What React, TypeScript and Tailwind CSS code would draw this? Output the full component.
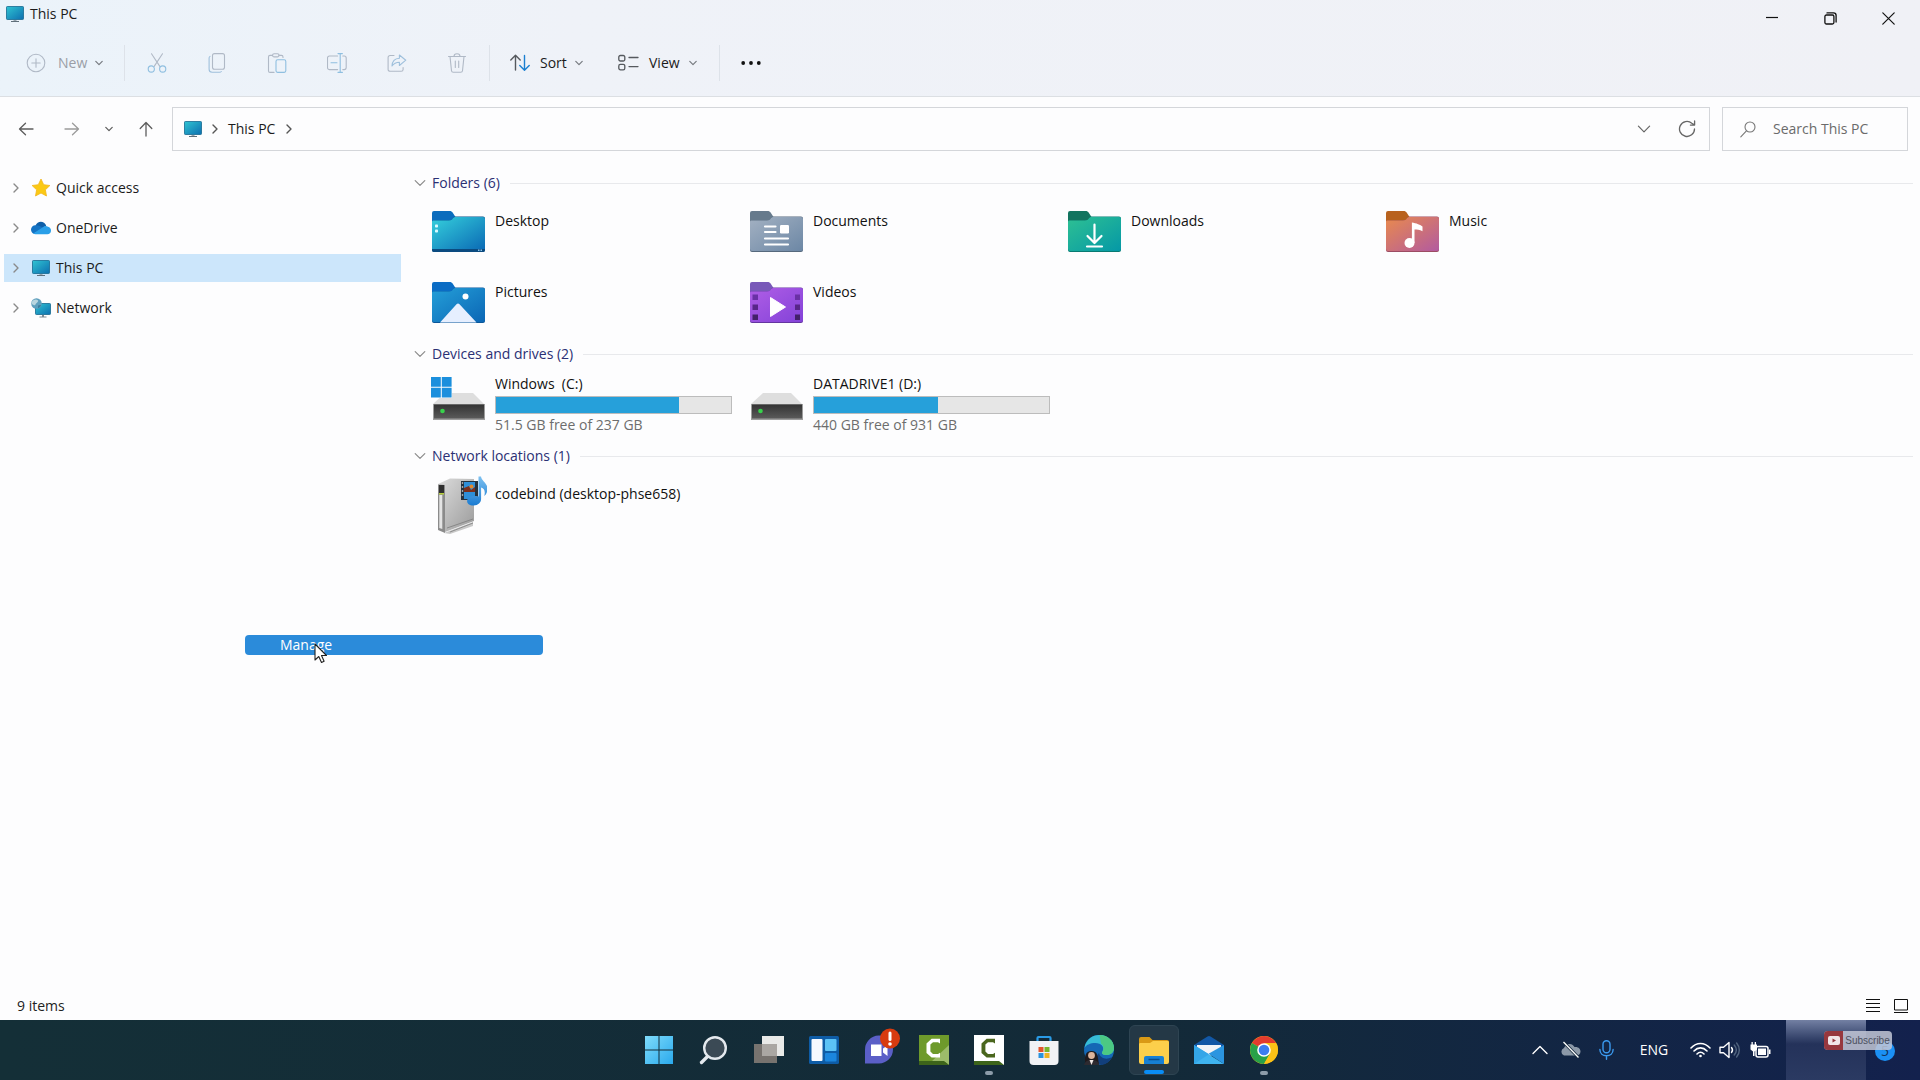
import type { ReactNode } from 'react';

const stroke = {
  fill: 'none',
  strokeLinecap: 'round' as const,
  strokeLinejoin: 'round' as const,
};

/* ---------- small glyphs ---------- */

function ChevronDown({ className = 'text-[#777b80]', size = 8 }: { className?: string; size?: number }) {
  return (
    <svg width={size} height={size} viewBox="0 0 8 8" className={className} {...stroke} stroke="currentColor">
      <path d="M0.8 2.4 4 5.6 7.2 2.4" vectorEffect="non-scaling-stroke" strokeWidth="1.2" />
    </svg>
  );
}

function ChevronRight({ className }: { className: string }) {
  return (
    <svg width="8" height="12" viewBox="0 0 8 12" className={className} {...stroke} stroke="currentColor" strokeWidth="1.4">
      <path d="M2 2l4 4-4 4" />
    </svg>
  );
}

function ArrowIcon({ className = '' }: { className?: string }) {
  return (
    <svg width="16" height="16" viewBox="0 0 16 16" className={className} {...stroke} stroke="currentColor" strokeWidth="1.3">
      <path d="M15 8H1.5M7.5 2.2 1.5 8l6 5.8" />
    </svg>
  );
}

function MonitorIcon() {
  return (
    <svg width="18" height="17" viewBox="0 0 18 17">
      <defs>
        <linearGradient id="screen" x1="0" y1="0" x2="1" y2="1">
          <stop offset="0" stopColor="#2fc4d2" />
          <stop offset="1" stopColor="#0d6fb0" />
        </linearGradient>
      </defs>
      <rect x="0.5" y="0.5" width="17" height="13" rx="0.8" fill="url(#screen)" stroke="#15688f" strokeWidth="0.8" />
      <path d="M7.5 14h3v1.3h-3z" fill="#9aa6ae" />
      <path d="M5 15h8v1H5z" fill="#5f6f7a" />
    </svg>
  );
}

/* ---------- toolbar ---------- */

function ToolSvg({ children }: { children: ReactNode }) {
  return (
    <svg width="20" height="20" viewBox="0 0 20 20" {...stroke} stroke="#b0b9c6" strokeWidth="1.1">
      {children}
    </svg>
  );
}

const tools = [
  {
    label: 'Cut',
    icon: (
      <>
        <path d="M4.5 0.8 13 13.6M15.5 0.8 7 13.6" />
        <circle cx="4.3" cy="16" r="3.1" stroke="#8fbfe0" />
        <circle cx="15.7" cy="16" r="3.1" stroke="#8fbfe0" />
      </>
    ),
  },
  {
    label: 'Copy',
    icon: (
      <>
        <rect x="5.5" y="0.6" width="12" height="15.6" rx="2" />
        <path d="M3 3.4a2 2 0 0 0-0.9 1.7v11.2a3 3 0 0 0 3 3h7.6a2 2 0 0 0 1.6-0.8" stroke="#9fc0dc" />
      </>
    ),
  },
  {
    label: 'Paste',
    icon: (
      <>
        <path d="M5.5 2.4H3a1.5 1.5 0 0 0-1.5 1.5v14A1.5 1.5 0 0 0 3 19.4h4M12 2.4h2.5A1.5 1.5 0 0 1 16 3.9v0.6" />
        <rect x="5.6" y="0.7" width="6.4" height="3.2" rx="1.5" />
        <rect x="9" y="6.8" width="9.8" height="12.6" rx="1.6" stroke="#8fbfe0" />
      </>
    ),
  },
  {
    label: 'Rename',
    icon: (
      <>
        <path d="M10.6 3H2.4A1.9 1.9 0 0 0 0.5 4.9v9.8a1.9 1.9 0 0 0 1.9 1.9h8.2M15.8 3h1.4a2 2 0 0 1 2 2v9.6a2 2 0 0 1-2 2h-1.4" />
        <path d="M13.2 1v18M11 0.6h4.4M11 19.4h4.4M4 9.8h6" stroke="#8fbfe0" />
      </>
    ),
  },
  {
    label: 'Share',
    icon: (
      <>
        <path d="M7 2.5H3A1.9 1.9 0 0 0 1.1 4.4v12A1.9 1.9 0 0 0 3 18.3h11.2a1.9 1.9 0 0 0 1.9-1.9v-1.8" />
        <path d="M12.4 2v3.2C8 5.4 5.2 8 5 13c2-2.9 4.2-3.8 7.4-3.8v3.3l6.4-5.3z" stroke="#9fc0dc" />
      </>
    ),
  },
  {
    label: 'Delete',
    icon: (
      <path d="M1.5 3.5h17M3 3.5l1.5 14.2a1.8 1.8 0 0 0 1.8 1.6h7.4a1.8 1.8 0 0 0 1.8-1.6L17 3.5M7 3.2a3 2.4 0 0 1 6 0M8.3 8v6.5M11.7 8v6.5" />
    ),
  },
];

function Divider() {
  return <div className="h-9 w-px bg-[#dde2e9]" />;
}

function Toolbar() {
  return (
    <div className="mb-1.5 flex h-[54px] items-center text-sm">
      <button className="ml-[26px] flex items-center text-[#9a9ea6]">
        <ToolSvg>
          <circle cx="10" cy="10" r="8.8" />
          <path d="M10 5.8v8.4M5.8 10h8.4" />
        </ToolSvg>
        <span className="ml-3 w-[37px] text-left">New</span>
        <ChevronDown />
      </button>
      <div className="ml-[21px] mr-0.5">
        <Divider />
      </div>
      {tools.map((tool) => (
        <button key={tool.label} aria-label={tool.label} className="flex h-10 w-[60px] items-center justify-center">
          <ToolSvg>{tool.icon}</ToolSvg>
        </button>
      ))}
      <div className="ml-0.5 mr-5">
        <Divider />
      </div>
      <button className="flex items-center text-[#1b1b1b]">
        <svg width="20" height="18" viewBox="0 0 20 18" {...stroke} strokeWidth="1.4">
          <path d="M5.5 16V1.5M0.8 6l4.700-4.700L10.200 6" stroke="#55595e" />
          <path d="M14.5 1.5V16M9.800 11.500l4.700 4.700 4.700-4.700" stroke="#1b7fd0" />
        </svg>
        <span className="ml-2.5 w-[35px] text-left">Sort</span>
        <ChevronDown />
      </button>
      <button className="ml-[35px] flex items-center text-[#1b1b1b]">
        <svg width="21" height="18" viewBox="0 0 21 18" {...stroke} stroke="#55595e" strokeWidth="1.3">
          <rect x="0.8" y="1.5" width="6" height="5.5" rx="1.6" />
          <rect x="0.8" y="10.3" width="6" height="5.5" rx="1.6" />
          <path d="M11 3.5h9M11 12.6h9" />
        </svg>
        <span className="ml-2.5 w-10 text-left">View</span>
        <ChevronDown />
      </button>
      <div className="ml-[22px] mr-[21px]">
        <Divider />
      </div>
      <button aria-label="See more">
        <svg width="20" height="6" viewBox="0 0 20 6" fill="#111">
          <circle cx="2.2" cy="3" r="1.9" />
          <circle cx="10" cy="3" r="1.9" />
          <circle cx="17.8" cy="3" r="1.9" />
        </svg>
      </button>
    </div>
  );
}

function TitleBar() {
  return (
    <div className="flex h-9 justify-between">
      <div className="flex h-7 items-center gap-1.5 pl-1.5 text-sm text-[#1b1b1b]">
        <MonitorIcon />
        <h1>This PC</h1>
      </div>
      <div className="flex items-center pr-0.5">
        <button aria-label="Minimize" className="flex h-9 w-[59px] items-center justify-center">
          <svg width="12" height="12" stroke="#111" strokeWidth="1.2">
            <path d="M0 5.5h12" />
          </svg>
        </button>
        <button aria-label="Restore" className="flex h-9 w-[58px] items-center justify-center">
          <svg width="13" height="13" viewBox="0 0 13 13" {...stroke} stroke="#111" strokeWidth="1.3">
            <rect x="0.9" y="3" width="9" height="9" rx="1.5" />
            <path d="M3 0.9h6.5a2.6 2.6 0 0 1 2.6 2.6V10" />
          </svg>
        </button>
        <button aria-label="Close" className="flex h-9 w-[59px] items-center justify-center">
          <svg width="13" height="13" viewBox="0 0 13 13" {...stroke} stroke="#111" strokeWidth="1.2">
            <path d="M0.8 0.8l11.4 11.4M12.2 0.8 0.8 12.2" />
          </svg>
        </button>
      </div>
    </div>
  );
}

function AddressRow() {
  return (
    <div className="flex items-center pr-3 pt-2.5 text-sm">
      <div className="flex w-[172px] items-center gap-2.5 pl-2 text-[#5c5c5c]">
        <button aria-label="Back" className="flex h-9 w-9 items-center justify-center">
          <ArrowIcon />
        </button>
        <button aria-label="Forward" className="flex h-9 w-9 items-center justify-center text-[#9b9b9b]">
          <ArrowIcon className="rotate-180" />
        </button>
        <button aria-label="Recent locations" className="flex h-9 w-[18px] items-center justify-center">
          <ChevronDown className="text-[#5c5c5c]" />
        </button>
        <button aria-label="Up" className="flex h-9 w-9 items-center justify-center">
          <ArrowIcon className="rotate-90" />
        </button>
      </div>
      <div className="flex h-11 flex-1 items-center border border-[#d4d6da] pl-[11px] pr-[13px] text-[#1b1b1b]">
        <MonitorIcon />
        <ChevronRight className="mx-[9px] text-[#555]" />
        <button className="w-12 whitespace-nowrap text-left">This PC</button>
        <ChevronRight className="ml-[9px] text-[#555]" />
        <button aria-label="Previous locations" className="ml-auto flex w-6 justify-center">
          <ChevronDown className="text-[#666]" size={14} />
        </button>
        <button aria-label="Refresh" className="ml-[22px]">
          <svg width="18" height="18" viewBox="0 0 18 18" {...stroke} stroke="#666" strokeWidth="1.3">
            <path d="M16.5 9A7.5 7.5 0 1 1 13.8 3.2L16.3 4.8M16.6 0.9v4.2h-4.2" />
          </svg>
        </button>
      </div>
      <label className="ml-3 flex h-11 w-[186px] items-center border border-[#d4d6da] pl-[17px]">
        <svg width="16" height="17" viewBox="0 0 16 17" className="shrink-0" {...stroke} stroke="#777" strokeWidth="1.1">
          <circle cx="10" cy="6" r="5" />
          <path d="M6.4 9.8 0.8 15.8" />
        </svg>
        <input
          aria-label="Search This PC"
          placeholder="Search This PC"
          className="ml-[17px] w-full min-w-0 bg-transparent outline-none placeholder:text-[#6b6b6b]"
        />
      </label>
    </div>
  );
}

/* ---------- navigation pane ---------- */

const navItems = [
  {
    label: 'Quick access',
    icon: (
      <svg width="20" height="20" viewBox="0 0 20 20">
        <path d="M10 1l2.7 5.7 6.2 0.8-4.5 4.3 1.1 6.2L10 15l-5.5 3 1.1-6.2L1.1 7.5l6.2-0.8z" fill="#fbc914" stroke="#f2b51c" strokeWidth="0.8" strokeLinejoin="round" />
      </svg>
    ),
  },
  {
    label: 'OneDrive',
    icon: (
      <svg width="20" height="14" viewBox="0 0 20 14">
        <path d="M4.5 4.5C6 1 10-0.5 13 1.8c1.2 0.9 1.9 2 2.2 3.2L8 9z" fill="#0f5fa8" />
        <path d="M4.4 4.2C2 4.2 0 6.2 0 8.6 0 10.5 1 12 2.5 12.8L13 7 8.5 4.9C7.2 4.2 5.7 4 4.4 4.2z" fill="#1473c4" />
        <path d="M11.5 6.5C13 4.6 15.5 4.4 17 5.8c2 0.4 3 2 3 3.9 0 2-1.6 3.5-3.6 3.5H4.5c-1 0-1.7-0.2-2.3-0.6z" fill="#2a9fe8" />
      </svg>
    ),
  },
  {
    label: 'This PC',
    icon: <MonitorIcon />,
    selected: true,
  },
  {
    label: 'Network',
    icon: (
      <svg width="20" height="20" viewBox="0 0 20 20">
        <rect x="4.5" y="5.5" width="15" height="11" rx="0.8" fill="url(#screen)" stroke="#15688f" strokeWidth="0.8" />
        <path d="M11 17h2v1.8h-2zM8.5 18.5h7v0.9h-7z" fill="#7d8b95" />
        <circle cx="5.5" cy="5.5" r="5.3" fill="#5e9fbd" />
        <path d="M2 2.5c2-1.5 4-1.3 5 0S5 5 4.5 6.5 2.2 7 1 6 1 3.500 2 2.500z" fill="#b9d6df" />
        <path d="M7 7.500c1-0.500 2-0.800 3-0.500-0.500 1.700-1.500 2.800-3 3.300z" fill="#3e7f9e" />
      </svg>
    ),
  },
];

function NavPane() {
  return (
    <nav className="flex w-[401px] shrink-0 flex-col gap-3 pl-1 pt-[23px]">
      {navItems.map((item) => (
        <a
          key={item.label}
          href="#"
          className={
            item.selected
              ? 'flex h-7 items-center bg-[#cce6fb] text-sm text-[#1b1b1b]'
              : 'flex h-7 items-center text-sm text-[#1b1b1b]'
          }
        >
          <ChevronRight className="ml-2 text-[#8a8a8a]" />
          <span className="ml-2.5 flex w-[22px] justify-center">{item.icon}</span>
          <span className="ml-1">{item.label}</span>
        </a>
      ))}
    </nav>
  );
}

/* ---------- folder icons ---------- */

type FolderProps = { id: string; tab: string; from: string; to: string; edge: string; children: ReactNode };

function FolderIcon({ id, tab, from, to, edge, children }: FolderProps) {
  return (
    <svg width="53" height="42" viewBox="0 0 53 42" className="shrink-0">
      <defs>
        <linearGradient id={id} x1="0" y1="0" x2="1" y2="1">
          <stop offset="0" stopColor={from} />
          <stop offset="1" stopColor={to} />
        </linearGradient>
      </defs>
      <path d="M0 2a2 2 0 0 1 2-2h15.5c1.5 0 2.5 0.5 3.3 1.8L23.5 6V20H0z" fill={tab} />
      <path d="M0 11c0-1 0.5-1.5 1.5-1.5H17c2 0 3-0.7 4-2.2 0.8-1.2 1.5-1.8 3-1.8h27a2 2 0 0 1 2 2V39a2 2 0 0 1-2 2H2a2 2 0 0 1-2-2z" fill={edge} />
      <path d="M0 11c0-1 0.5-1.5 1.5-1.5H17c2 0 3-0.7 4-2.2 0.8-0.9 1.5-1.2 3-1.2h27a2 2 0 0 1 2 2V38a2 2 0 0 1-2 2H2a2 2 0 0 1-2-2z" fill={`url(#${id})`} />
      {children}
    </svg>
  );
}

const folders = [
  {
    label: 'Desktop',
    icon: (
      <FolderIcon id="desktop" tab="#0b6cbd" from="#35d0dc" to="#0a68b4" edge="#0a4f86">
        <path d="M0 38h53v1a2 2 0 0 1-2 2H2a2 2 0 0 1-2-2z" fill="#0b4b80" />
        <rect x="3" y="13.5" width="3" height="3" rx="0.8" fill="#d9fbff" />
        <rect x="3" y="18.5" width="3" height="3" rx="0.8" fill="#d9fbff" />
        <path d="M46 38.5h1.500V40H46zM48.500 38.500H50V40h-1.500z" fill="#8cc4ea" />
      </FolderIcon>
    ),
  },
  {
    label: 'Documents',
    icon: (
      <FolderIcon id="documents" tab="#667a8c" from="#a3b1c2" to="#6c87a5" edge="#56697d">
        <path d="M15 15.5h10.5M15 21h10.5M15 27.500h23M15 33.500h23" stroke="#fff" strokeWidth="2.2" strokeLinecap="round" />
        <rect x="30" y="14" width="9" height="8.5" rx="1.2" fill="#fff" />
      </FolderIcon>
    ),
  },
  {
    label: 'Downloads',
    icon: (
      <FolderIcon id="downloads" tab="#12745f" from="#2ec093" to="#0598a6" edge="#087a72">
        <g {...stroke} stroke="#fff" strokeWidth="2.2">
          <path d="M26.5 13.5V31M19.500 25l7 7 7-7M19 35.500h15" />
        </g>
      </FolderIcon>
    ),
  },
  {
    label: 'Music',
    icon: (
      <FolderIcon id="music" tab="#b8621e" from="#e98a4d" to="#b25aa0" edge="#9c4c63">
        <circle cx="23.5" cy="32" r="5" fill="#fff" />
        <path d="M25.9 32V11.500c4 0.500 9 2.500 10.600 4v4.800c-3-1.600-5.500-1.800-8-1.800V32z" fill="#fff" />
      </FolderIcon>
    ),
  },
  {
    label: 'Pictures',
    icon: (
      <FolderIcon id="pictures" tab="#0b6cc4" from="#249fd8" to="#0b66b5" edge="#0a5699">
        <circle cx="33.5" cy="14.5" r="3" fill="#fff" />
        <path d="M8 40.500 24.500 22.300c1-1.100 2-1.100 3 0L44.500 40.500z" fill="#e6efff" />
      </FolderIcon>
    ),
  },
  {
    label: 'Videos',
    icon: (
      <FolderIcon id="videos" tab="#7858b8" from="#b05ee6" to="#8342d8" edge="#6435a0">
        <path d="M2.500 12.500h5.500v5.500H2.500zM45 12.500h5v5.500h-5z" fill="#6a31a5" />
        <path d="M2.500 22.500h5.500v5.500H2.500zM45 22.500h5v5.500h-5z" fill="#582689" />
        <path d="M2.500 32.500h5.500v5.500H2.500zM45 32.500h5v5.500h-5z" fill="#43206a" />
        <path d="M20.500 15.500 35.500 25 20.500 34.500z" fill="#fff" stroke="#fff" strokeLinejoin="round" />
      </FolderIcon>
    ),
  },
];

/* ---------- drives ---------- */

function DriveIcon({ system = false }: { system?: boolean }) {
  return (
    <svg width="55" height="45" viewBox="0 0 55 45" className="shrink-0">
      <defs>
        <linearGradient id="driveFace" x1="0" y1="0" x2="0" y2="1">
          <stop offset="0" stopColor="#333" />
          <stop offset="1" stopColor="#5a5a5a" />
        </linearGradient>
      </defs>
      <path d="M14 16h28l11 11H2z" fill="#dedede" />
      <path d="M2 27h52v16H2z" fill="#9d9d9d" />
      <path d="M3 27.500h50v14H3z" fill="url(#driveFace)" />
      <circle cx="11.5" cy="34" r="2.3" fill="#38d24c" />
      {system && (
        <>
          <path d="M0 0h21v21H0z" fill="#fdfdfd" />
          <path d="M0 0h9.800v9.800H0zM10.800 0h9.800v9.800h-9.800zM0 10.800h9.800v9.800H0zM10.800 10.800h9.800v9.800h-9.800z" fill="#1b8fdd" />
        </>
      )}
    </svg>
  );
}

const drives = [
  { label: 'Windows\u00a0 (C:)', free: '51.5 GB free of 237 GB', used: 78, system: true },
  { label: 'DATADRIVE1 (D:)', free: '440 GB free of 931 GB', used: 52.7, system: false },
];

function MediaServerIcon() {
  return (
    <svg width="55" height="58" viewBox="0 0 55 58" className="shrink-0">
      <defs>
        <linearGradient id="server" x1="0" y1="0" x2="1" y2="1">
          <stop offset="0" stopColor="#dcdcdc" />
          <stop offset="1" stopColor="#9b9b9b" />
        </linearGradient>
        <linearGradient id="note" x1="0" y1="0" x2="0" y2="1">
          <stop offset="0" stopColor="#7cc0f0" />
          <stop offset="1" stopColor="#1b7cd2" />
        </linearGradient>
      </defs>
      <path d="M12 57 41 46v4L18 58z" fill="#c9c9c9" />
      <path d="M6 8 18 2.500 42 3v42L13 56z" fill="url(#server)" />
      <path d="M6 8.500 13 9v48l-7-3z" fill="#8b8b8b" />
      <path d="M7.300 19h3v34l-3-1z" fill="#e4e4e4" />
      <path d="M7 9h5v8H7z" fill="#2f2f2f" />
      <path d="M7 17h5v1.500H7z" fill="#b7cf3c" />
      <path d="M15 52 41 43M18 56l23-9" stroke="#7c7c7c" strokeWidth="0.8" />
      <path d="M29 5h17v19H29z" fill="#26313c" />
      <path d="M32 6h11v17H32z" fill="#2f8fd8" />
      <path d="M32 12l5-2 2 4 4-3v5H32z" fill="#7c2f1c" />
      <circle cx="39.5" cy="10.5" r="2" fill="#e0882f" />
      <path d="M29.800 7h1.400M29.800 11h1.400M29.800 15h1.400M29.800 19h1.400" stroke="#ccc" strokeWidth="1.3" />
      <path
        d="M46.500 0.500h2.500c0.500 4.500 7 7 6.500 13-0.200 3-1.800 5.500-3.200 6.500 1.200-5 0-7.500-3.200-8.500v11.500c0 3.500-3 6.500-7.500 6.500s-6.500-2-6.500-4.500c0-3.500 5-6 11.400-4.500z"
        fill="url(#note)"
      />
    </svg>
  );
}

function Section({ title, children }: { title: string; children: ReactNode }) {
  return (
    <section>
      <div className="flex h-6 items-center pr-[7px]">
        <ChevronDown className="mr-1.5 text-[#8a8a8a]" size={12} />
        <h2 className="text-[#2b3074]">{title}</h2>
        <div className="ml-2.5 h-px flex-1 bg-[#e8e9ec]" />
      </div>
      {children}
    </section>
  );
}

function Content() {
  return (
    <main className="min-w-0 flex-1 pl-[13px] pt-5 text-sm text-[#111]">
      <Section title="Folders (6)">
        <ul className="grid grid-cols-[repeat(4,318px)] gap-y-[29px] pb-[18px] pl-[18px] pt-4">
          {folders.map((folder) => (
            <li key={folder.label} className="flex gap-2.5">
              {folder.icon}
              <span>{folder.label}</span>
            </li>
          ))}
        </ul>
      </Section>
      <Section title="Devices and drives (2)">
        <ul className="grid grid-cols-[repeat(4,318px)] pb-[9px] pl-[17px] pt-2">
          {drives.map((drive) => (
            <li key={drive.label} className="flex gap-[9px]">
              <div className="pt-[3px]">
                <DriveIcon system={drive.system} />
              </div>
              <div className="w-[237px]">
                <div className="mb-0.5">{drive.label}</div>
                <div className="h-[18px] border border-[#bcbcbc] bg-[#e6e6e6]">
                  <div className="h-full bg-[#26a0da]" style={{ width: `${drive.used}%` }} />
                </div>
                <div className="mt-px text-[#6d6d6d]">{drive.free}</div>
              </div>
            </li>
          ))}
        </ul>
      </Section>
      <Section title="Network locations (1)">
        <div className="flex gap-2 pl-[18px] pt-2">
          <div className="w-[55px]">
            <MediaServerIcon />
          </div>
          <span className="pt-2">codebind (desktop-phse658)</span>
        </div>
      </Section>
    </main>
  );
}

function StatusBar() {
  return (
    <footer className="flex h-7 items-center justify-between pl-[17px] pr-3 text-sm text-[#222]">
      <span>9 items</span>
      <div className="flex items-center gap-3.5">
        <button aria-label="Details view">
          <svg width="14" height="14" stroke="#111" strokeWidth="1">
            <path d="M0 0.5h14M0 4.5h14M0 8.5h14M0 12.5h14" />
          </svg>
        </button>
        <button aria-label="Large icons view">
          <svg width="14" height="14" fill="none" stroke="#111">
            <path d="M0.5 0.5h13v10.500H0.5zM0 13.5h14" />
          </svg>
        </button>
      </div>
    </footer>
  );
}

/* ---------- taskbar ---------- */

function CamtasiaMark({ color }: { color: string }) {
  return <path d="M21 3.800v4.600l-2-1.200h-5L11.400 9.400v7.200L14 19h5l2-1.200v4.700h-8.400L7.500 18V8.400L12.600 3.800z" fill={color} />;
}

const apps = [
  {
    label: 'Start',
    icon: <path d="M1 1h13.500v13.500H1zM15.500 1H29v13.500H15.500zM1 15.500h13.500V29H1zM15.500 15.500H29V29H15.500z" fill="url(#startFill)" />,
  },
  {
    label: 'Search',
    icon: (
      <>
        <path d="M10 20 2.500 27.500" stroke="#e4e9ee" strokeWidth="3.4" strokeLinecap="round" />
        <circle cx="16" cy="13" r="10.8" fill="#3b4a55" stroke="#e4e9ee" strokeWidth="2.4" />
      </>
    ),
  },
  {
    label: 'Task view',
    icon: (
      <>
        <path d="M8 1h22v20H8z" fill="#e9eae8" />
        <path d="M0 9h23v19H0z" fill="#77736f" />
        <path d="M8 9h15v12H8z" fill="#aaa7a3" />
      </>
    ),
  },
  {
    label: 'Widgets',
    icon: (
      <>
        <rect x="0" y="1" width="30" height="28" rx="1.5" fill="#0e5ca6" />
        <rect x="2.5" y="4" width="11" height="22" rx="1" fill="#f5f9ff" />
        <rect x="16" y="4" width="11.5" height="12" rx="1" fill="#5cc2f5" />
        <rect x="16" y="18" width="11.5" height="8.5" rx="1" fill="#1b86de" />
      </>
    ),
  },
  {
    label: 'Chat',
    icon: (
      <>
        <path d="M1 28.500V15a14 14 0 1 1 14 13.500z" fill="#5b5fc7" />
        <path d="M7 9.500h10.500v11.500H7zM19 13.500l4.500-3v10.500L19 17.500z" fill="#fff" />
        <circle cx="26" cy="3.5" r="10" fill="#d83b0f" />
        <path d="M26-2v6.500" stroke="#fff" strokeWidth="3" strokeLinecap="round" />
        <circle cx="26" cy="9" r="1.8" fill="#fff" />
      </>
    ),
  },
  {
    label: 'Camtasia',
    icon: (
      <>
        <path d="M0 0h30v30L25 27H0z" fill="#6e9a2b" />
        <path d="M30 10v20l-4-3H12z" fill="#9cbc6a" />
        <path d="M0 26h25l5 4H0z" fill="#3d641a" />
        <CamtasiaMark color="#fff" />
      </>
    ),
  },
  {
    label: 'Camtasia Recorder',
    running: true,
    icon: (
      <>
        <path d="M0 0h30v30H0z" fill="#fff" />
        <path d="M0 26h25l5 4H0z" fill="#3d641a" />
        <CamtasiaMark color="#4a661d" />
      </>
    ),
  },
  {
    label: 'Microsoft Store',
    icon: (
      <>
        <path d="M8.500 7V3a1 1 0 0 1 1-1h11a1 1 0 0 1 1 1v4" fill="none" stroke="#2a9be6" strokeWidth="2.2" />
        <path d="M0.500 6h29v20a4 4 0 0 1-4 4h-21a4 4 0 0 1-4-4z" fill="#f1f2f5" />
        <path d="M9.500 12h5v5h-5z" fill="#e3552b" />
        <path d="M15.500 12h5v5h-5z" fill="#79b62c" />
        <path d="M9.500 18h5v5h-5z" fill="#2a93dd" />
        <path d="M15.500 18h5v5h-5z" fill="#f0b322" />
      </>
    ),
  },
  {
    label: 'Edge',
    icon: (
      <>
        <circle cx="15" cy="15" r="15" fill="#1568b5" />
        <path d="M0.500 13C2 4 8.500 0 15.500 0 24 0 30 6 30 13c0 4.500-3.500 7-7.500 7-3.500 0-5.500-1.500-4-3.500C21 12 17 8 11.500 8 6 8 2 10 0.500 13z" fill="#37bdd6" />
        <path d="M15.500 0C24 0 30 6 30 13c0 4.500-3.500 7-7.500 7-3.500 0-5.500-1.500-4-3.500 2-3.500 1-6-1.500-8z" fill="#4cc983" />
        <path d="M15 18c1 5 7 7.500 13 4-2 4.500-6 7.500-11 8-5-3-6-8-2-12z" fill="#123f7c" />
        <path d="M1 29c0-8 0-13 6.500-13s6 5 7.500 13z" fill="#201a1c" />
        <circle cx="7.5" cy="20.5" r="3.4" fill="#dcb49c" />
        <path d="M0 30c1-4 4-5 7.500-5s7 1 8 5z" fill="#2d2a30" />
        <path d="M5.500 25h4l-2 5z" fill="#f1e9e6" />
      </>
    ),
  },
  {
    label: 'File Explorer',
    active: true,
    icon: (
      <>
        <path d="M0 4a2 2 0 0 1 2-2h8.500l3 3H28a2 2 0 0 1 2 2v8H0z" fill="#d99a16" />
        <path d="M0 9.500c0-1 0.500-1.500 1.500-1.500H11l3-2h14.500c1 0 1.500 0.500 1.500 1.500V27a2 2 0 0 1-2 2H2a2 2 0 0 1-2-2z" fill="#fccf4b" />
        <path d="M5 29v-6a2 2 0 0 1 2-2h16a2 2 0 0 1 2 2v6z" fill="#1780d4" />
        <path d="M9.500 24.500h11" stroke="#0b4d8a" strokeWidth="1.5" />
      </>
    ),
  },
  {
    label: 'Mail',
    icon: (
      <>
        <path d="M0 10 13.500 1.500a3 3 0 0 1 3 0L30 10v8H0z" fill="#1257a5" />
        <path d="M3 10h24v8L15 21 3 18z" fill="#f2f4f7" />
        <path d="M0 10 30 29H0z" fill="#3fb4f0" />
        <path d="M30 10v19L14.500 18.800z" fill="#2b95e0" />
        <path d="M0 10 15 19.200 0 29z" fill="#34a6e8" />
      </>
    ),
  },
  {
    label: 'Chrome',
    running: true,
    icon: (
      <>
        <circle cx="15" cy="15" r="14" fill="#fbc116" />
        <path d="M15 15 2.900 8A14 14 0 0 1 27.100 8z" fill="#e33b2e" />
        <path d="M2.900 8A14 14 0 0 0 15 29l6-10.500-6-3.500z" fill="#28a148" />
        <path d="M15 8h12.100A14 14 0 0 1 15 29l6-10.500z" fill="#fbc116" />
        <circle cx="15" cy="15" r="6.8" fill="#fff" />
        <circle cx="15" cy="15" r="5.3" fill="#3c7df0" />
      </>
    ),
  },
];

function AppButton({ label, icon, active, running }: { label: string; icon: ReactNode; active?: boolean; running?: boolean }) {
  return (
    <button aria-label={label} className="flex w-[55px] items-center justify-center">
      <span
        className={
          active
            ? 'relative flex h-[50px] w-[50px] items-center justify-center rounded-md border border-[#2e4452] bg-[#243846]'
            : 'relative flex h-[50px] w-[50px] items-center justify-center'
        }
      >
        <svg width="30" height="30" viewBox="0 0 30 30" overflow="visible">
          {icon}
        </svg>
        {active && <span className="absolute bottom-0 h-1 w-5 rounded-full bg-[#0a8df5]" />}
        {running && <span className="absolute bottom-0 h-1 w-2 rounded-full bg-[#8d9ca9]" />}
      </span>
    </button>
  );
}

function Tray() {
  return (
    <div className="flex items-center justify-end text-white">
      <button aria-label="Show hidden icons">
        <svg width="16" height="10" viewBox="0 0 16 10" {...stroke} stroke="#fff" strokeWidth="1.4">
          <path d="M1 8.500 8 1.500l7 7" />
        </svg>
      </button>
      <svg className="ml-3" width="21" height="18" viewBox="0 0 21 18">
        <path d="M4 14.500a4 4 0 0 1 0-7.500C5.500 2.500 12 1 14.500 6c4-0.500 6 2 6 4.500s-2 4-4 4z" fill="#8c99a8" />
        <path d="M4 1.500 18.500 16.500" stroke="#14283c" strokeWidth="3" />
        <path d="M3.500 1 18.500 16.500" stroke="#fff" strokeWidth="1.3" />
      </svg>
      <svg className="ml-[18px]" width="15" height="20" viewBox="0 0 15 20" {...stroke} stroke="#3b9af0" strokeWidth="1.4">
        <rect x="4" y="0.8" width="7" height="12" rx="3.5" />
        <path d="M0.900 9.500c0 4 3 6.300 6.600 6.300s6.600-2.300 6.600-6.300M7.500 16v3.300" />
      </svg>
      <button className="ml-[25px] w-[30px] text-sm">ENG</button>
      <svg className="ml-[21px]" width="21" height="16" viewBox="0 0 21 16" {...stroke} stroke="#fff" strokeWidth="1.6">
        <path d="M1 6c5.500-6 13.500-6 19 0M4 9c4-4.200 9-4.200 13 0M7 12c2.200-2.200 4.800-2.200 7 0" />
        <circle cx="10.5" cy="14" r="1.3" fill="#fff" stroke="none" />
      </svg>
      <svg className="ml-2" width="21" height="18" viewBox="0 0 21 18" {...stroke} stroke="#fff" strokeWidth="1.4">
        <path d="M1 6.200h3.500L10 1.500v15l-5.500-4.700H1z" />
        <path d="M12.500 6.500c1.200 1.500 1.200 3.500 0 5" />
        <path d="M15.200 4c2.600 3 2.600 7 0 10M17.600 2c3.600 4.200 3.600 9.800 0 14" stroke="#51647f" />
      </svg>
      <svg className="ml-2.5" width="21" height="17" viewBox="0 0 21 17">
        <rect x="6" y="4.5" width="12" height="10.5" rx="2" fill="none" stroke="#fff" strokeWidth="1.5" />
        <path d="M8 6.500h8v6.500H8zM19 7.500h1.500v4.500H19z" fill="#fff" />
        <path d="M0.500 2.500h6.500v5L4.500 9.500V14H3V9.500L0.500 7.500zM1.500 0h1.300v2.500H1.500zM4.700 0H6v2.500H4.700z" fill="#fff" />
      </svg>
      <div className="relative ml-[15px] h-[60px] w-[134px]">
        <div className="h-full w-20 bg-gradient-to-b from-[#7380a3] via-[#24325a] via-40% to-[#2b3a62]" />
        <span className="absolute left-[89px] top-[21px] h-5 w-5 rounded-full bg-[#1b90f5] text-center text-sm leading-5 text-[#12305c]">
          5
        </span>
        <button className="absolute left-[38px] top-[11px] flex h-[19px] w-[68px] items-center overflow-hidden rounded-sm bg-[#c3c7d6]/85 font-['Liberation_Sans',sans-serif] text-[10px] leading-none text-[#4c5060]">
          <span className="flex h-full w-[19px] shrink-0 items-center justify-center bg-[#97383e]">
            <svg width="12" height="9" viewBox="0 0 12 9">
              <rect width="12" height="9" rx="2" fill="#f1e6e8" />
              <path d="M4.500 2.500v4L8 4.500z" fill="#97383e" />
            </svg>
          </span>
          <span className="flex-1 text-center">Subscribe</span>
        </button>
      </div>
    </div>
  );
}

function Taskbar() {
  return (
    <div className="grid h-[60px] grid-cols-[1fr_auto_1fr] bg-gradient-to-r from-[#142f37] via-[#132a38] via-60% to-[#13214d] pl-0.5">
      <svg width="0" height="0">
        <linearGradient id="startFill" x1="0" y1="0" x2="1" y2="1">
          <stop offset="0" stopColor="#7fdcfb" />
          <stop offset="1" stopColor="#2aa9ec" />
        </linearGradient>
      </svg>
      <div className="flex">
        {apps.map((app) => (
          <AppButton key={app.label} {...app} />
        ))}
      </div>
      <Tray />
    </div>
  );
}

function ContextMenu() {
  return (
    <div role="menu" className="absolute left-[245px] top-[635px] w-[298px]">
      <button role="menuitem" className="flex h-5 w-full items-center rounded-sm bg-[#2b8bda] pl-[35px] text-sm text-white">
        Manage
      </button>
      <svg className="absolute left-[69px] top-2" width="14" height="22" viewBox="0 0 14 22">
        <path d="M1 1v16l3.800-3.500 2.700 6 2.600-1.200-2.600-5.800h5z" fill="#fff" stroke="#222" strokeWidth="1.1" strokeLinejoin="round" />
      </svg>
    </div>
  );
}

export default function App() {
  return (
    <div className="relative flex min-h-screen flex-col bg-[#fdfdfe] font-['Open_Sans','Noto_Sans',sans-serif]">
      <header className="border-b border-[#dcdfe3] bg-gradient-to-r from-[#ebf3fa] via-[#eff2f8] via-30% to-[#f0f1f6]">
        <TitleBar />
        <Toolbar />
      </header>
      <AddressRow />
      <div className="flex flex-1">
        <NavPane />
        <Content />
      </div>
      <StatusBar />
      <Taskbar />
      <ContextMenu />
    </div>
  );
}
